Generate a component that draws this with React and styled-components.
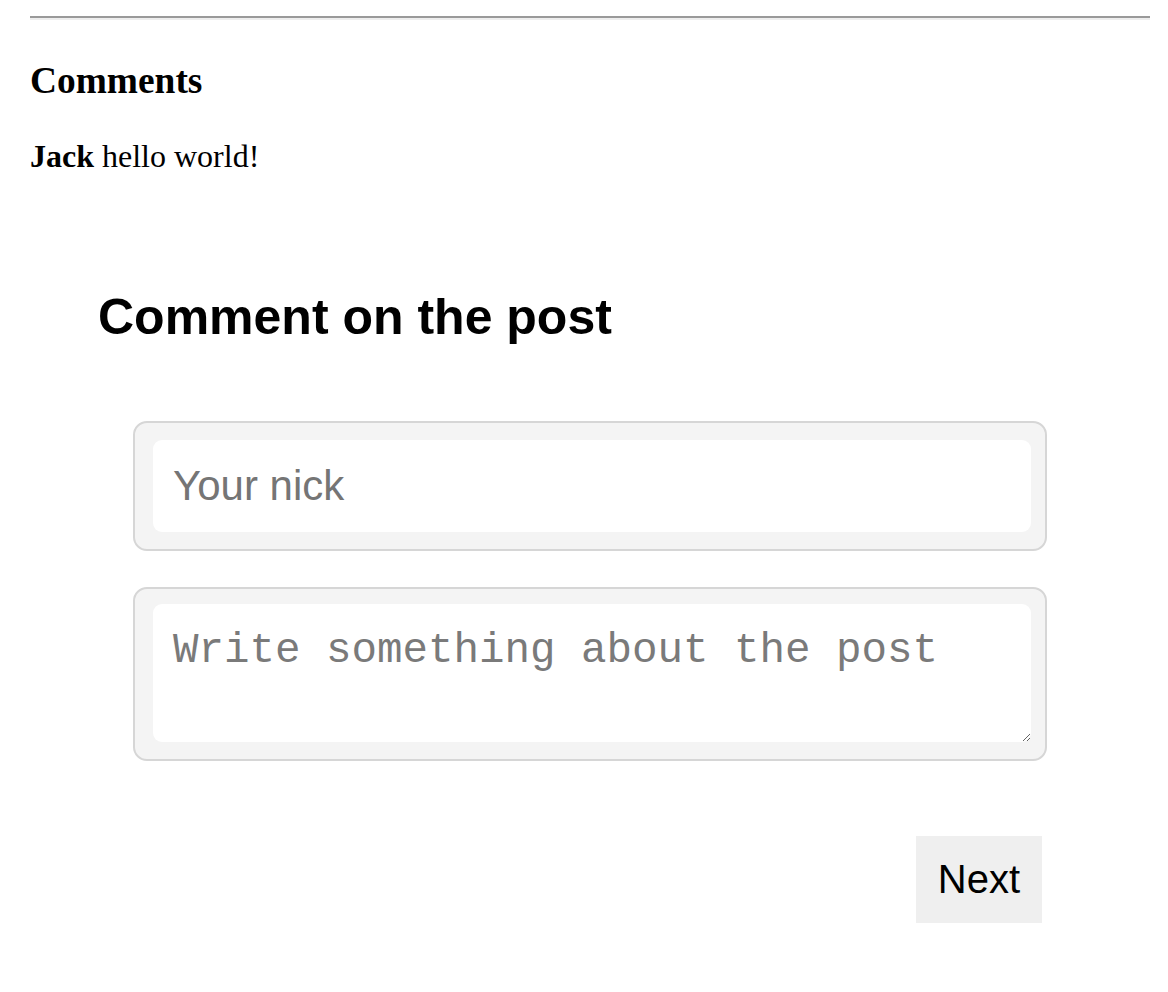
import React from "react";
import styled, { createGlobalStyle } from "styled-components";

const GlobalStyle = createGlobalStyle`
  body {
    margin: 0;
    background: #ffffff;
    font-family: "Liberation Serif", "Times New Roman", serif;
    color: #000000;
  }
`;

const Page = styled.div`
  padding: 16px 18px 40px 30px;
`;

const Rule = styled.hr`
  margin: 0;
  height: 0;
  border: none;
  border-top: 2px solid #9a9a9a;
  border-bottom: 2px solid #eeeeee;
`;

const SectionTitle = styled.h3`
  margin: 40px 0 0;
  font-size: 37.4px;
  line-height: 42px;
  font-weight: 700;
`;

const Comment = styled.p`
  margin: 36px 0 0;
  font-size: 32px;
  line-height: 36px;
`;

const Author = styled.strong`
  font-weight: 700;
`;

const FormTitle = styled.h2`
  margin: 115px 0 0 68px;
  font-family: "Liberation Sans", Arial, sans-serif;
  font-size: 50px;
  line-height: 56px;
  font-weight: 700;
`;

const Form = styled.form`
  margin: 76px 0 0 103px;
  width: 914px;
  display: flex;
  flex-direction: column;
  gap: 36px;
`;

const Field = styled.div`
  box-sizing: border-box;
  border: 2px solid #d6d6d6;
  border-radius: 14px;
  background: #f4f4f4;
  padding: ${(p) => p.$pad};
`;

const TextInput = styled.input`
  display: block;
  box-sizing: border-box;
  width: 100%;
  height: 92px;
  margin: 0;
  padding: 0 20px;
  border: none;
  border-radius: 9px;
  background: #ffffff;
  font-family: "Liberation Sans", Arial, sans-serif;
  font-size: 42px;
  color: #000000;
  outline: none;

  &::placeholder {
    color: #757575;
  }
`;

const TextArea = styled.textarea`
  display: block;
  box-sizing: border-box;
  width: 100%;
  height: 138px;
  margin: 0;
  padding: 23px 20px;
  border: none;
  border-radius: 9px;
  background: #ffffff;
  font-family: "Liberation Mono", "Courier New", monospace;
  font-size: 42.5px;
  color: #000000;
  outline: none;
  resize: vertical;

  &::placeholder {
    color: #7a7a7a;
  }
`;

const Actions = styled.div`
  display: flex;
  justify-content: flex-end;
  padding: 39px 5px 0 0;
`;

const Button = styled.button`
  height: 87px;
  padding: 0 22px;
  border: none;
  background: #efefef;
  font-family: "Liberation Sans", Arial, sans-serif;
  font-size: 40px;
  color: #000000;
  cursor: pointer;
`;

const App = () => {
  return (
    <Page>
      <GlobalStyle />
      <Rule />
      <SectionTitle>Comments</SectionTitle>
      <Comment>
        <Author>Jack</Author> hello world!
      </Comment>
      <FormTitle>Comment on the post</FormTitle>
      <Form onSubmit={(e) => e.preventDefault()}>
        <Field $pad="17px 14px 17px 18px">
          <TextInput type="text" placeholder="Your nick" />
        </Field>
        <Field $pad="15px 14px 17px 18px">
          <TextArea placeholder="Write something about the post" />
        </Field>
        <Actions>
          <Button type="submit">Next</Button>
        </Actions>
      </Form>
    </Page>
  );
};

export default App;
